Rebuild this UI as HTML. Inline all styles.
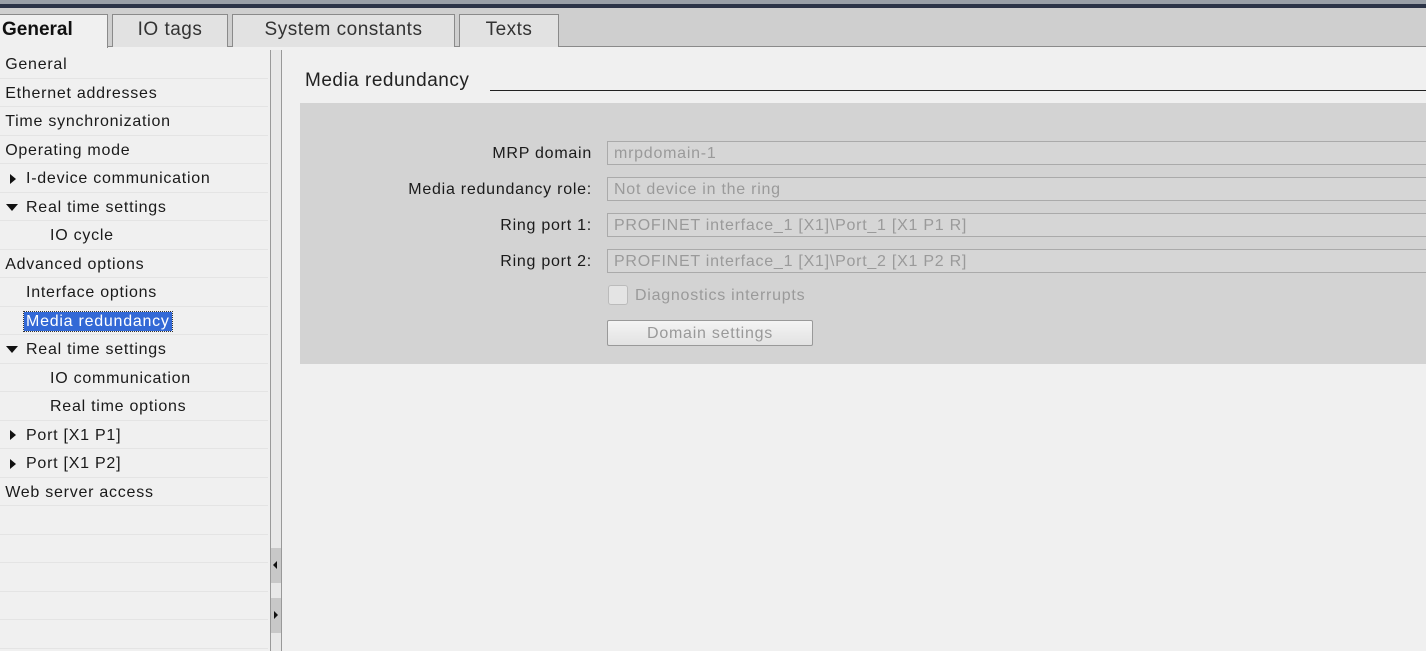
<!DOCTYPE html>
<html><head><meta charset="utf-8"><style>
*{margin:0;padding:0;box-sizing:border-box}
body{width:1426px;height:651px;overflow:hidden;background:#f0f0f0;font-family:"Liberation Sans",sans-serif;font-size:16px;letter-spacing:0.75px;color:#1a1a1a;position:relative}
.a{position:absolute}
.tab{position:absolute;top:14px;height:33px;border:1px solid #8a8a8a;border-bottom:none;background:#e2e2e2;color:#333;font-size:19px;line-height:30px;text-align:center;letter-spacing:0.5px}
.row{position:absolute;left:0;width:268px;height:28.5px;border-bottom:1px solid #e4e4e4;line-height:30px;white-space:nowrap}
.lbl{position:absolute;right:834px;text-align:right;white-space:nowrap;font-size:16px}
.fld{position:absolute;left:607px;right:-2px;height:24px;border:1px solid #aaa;background:#d6d6d6;color:#9a9a9a;line-height:23px;padding-left:6px;font-size:16px}
.tri{display:inline-block;width:0;height:0}
.r{border-top:5px solid transparent;border-bottom:5px solid transparent;border-left:6px solid #111;margin:0 10px 0 10px;vertical-align:middle}
.d{border-left:6px solid transparent;border-right:6px solid transparent;border-top:7px solid #111;margin:0 8px 0 6px;vertical-align:middle}
</style></head><body>
<div class="a" style="left:0;top:0;width:1426px;height:4px;background:#9aa0a8"></div>
<div class="a" style="left:0;top:4px;width:1426px;height:4px;background:#2c3448"></div>
<div class="a" style="left:0;top:8px;width:1426px;height:39px;background:#cfcfcf"></div>
<div class="a" style="left:0;top:46px;width:1426px;height:1px;background:#8a8a8a"></div>
<div class="tab" style="left:-2px;width:110px;background:#f0f0f0;height:34px;color:#111;font-weight:bold;text-align:left;padding-left:3px;letter-spacing:0">General</div>
<div class="tab" style="left:112px;width:116px">IO tags</div>
<div class="tab" style="left:232px;width:223px">System constants</div>
<div class="tab" style="left:459px;width:100px">Texts</div>

<div class="a" style="left:0;top:50px;width:270px;height:601px">
<div class="row" style="top:0">&nbsp;General</div>
<div class="row" style="top:28.5px">&nbsp;Ethernet addresses</div>
<div class="row" style="top:57px">&nbsp;Time synchronization</div>
<div class="row" style="top:85.5px">&nbsp;Operating mode</div>
<div class="row" style="top:114px"><span class="tri r"></span>I-device communication</div>
<div class="row" style="top:142.5px"><span class="tri d"></span>Real time settings</div>
<div class="row" style="top:171px;padding-left:50px">IO cycle</div>
<div class="row" style="top:199.5px">&nbsp;Advanced options</div>
<div class="row" style="top:228px;padding-left:26px">Interface options</div>
<div class="row" style="top:256.5px;padding-left:24px"><span style="background:#3369d6;color:#fff;outline:1px dotted #333;padding:1px 2px">Media redundancy</span></div>
<div class="row" style="top:285px"><span class="tri d"></span>Real time settings</div>
<div class="row" style="top:313.5px;padding-left:50px">IO communication</div>
<div class="row" style="top:342px;padding-left:50px">Real time options</div>
<div class="row" style="top:370.5px"><span class="tri r"></span>Port [X1 P1]</div>
<div class="row" style="top:399px"><span class="tri r"></span>Port [X1 P2]</div>
<div class="row" style="top:427.5px">&nbsp;Web server access</div>
<div class="row" style="top:456px"></div>
<div class="row" style="top:484.5px"></div>
<div class="row" style="top:513px"></div>
<div class="row" style="top:541.5px"></div>
<div class="row" style="top:570px"></div>
</div>
<div class="a" style="left:270px;top:50px;width:12px;height:601px;background:#e8e8e8;border-left:1px solid #999;border-right:1px solid #999"></div>
<div class="a" style="left:271px;top:548px;width:10px;height:35px;background:#c8c8c8"></div>
<div class="a" style="left:273px;top:561px;border-top:4px solid transparent;border-bottom:4px solid transparent;border-right:4px solid #111"></div>
<div class="a" style="left:271px;top:598px;width:10px;height:35px;background:#c8c8c8"></div>
<div class="a" style="left:274px;top:611px;border-top:4px solid transparent;border-bottom:4px solid transparent;border-left:4px solid #111"></div>

<div class="a" style="left:305px;top:70px;font-size:19px;color:#222;letter-spacing:0.5px">Media redundancy</div>
<div class="a" style="left:490px;top:90px;width:936px;height:1px;background:#222"></div>
<div class="a" style="left:300px;top:103px;width:1126px;height:261px;background:#d3d3d3"></div>
<div class="lbl" style="top:145px">MRP domain</div>
<div class="lbl" style="top:181px">Media redundancy role:</div>
<div class="lbl" style="top:217px">Ring port 1:</div>
<div class="lbl" style="top:253px">Ring port 2:</div>
<div class="fld" style="top:141px">mrpdomain-1</div>
<div class="fld" style="top:177px">Not device in the ring</div>
<div class="fld" style="top:213px">PROFINET interface_1 [X1]\Port_1 [X1 P1 R]</div>
<div class="fld" style="top:249px">PROFINET interface_1 [X1]\Port_2 [X1 P2 R]</div>
<div class="a" style="left:608px;top:285px;width:20px;height:20px;border:1px solid #bbb;border-radius:3px;background:#e4e4e4"></div>
<div class="a" style="left:635px;top:287px;color:#9a9a9a">Diagnostics interrupts</div>
<div class="a" style="left:607px;top:320px;width:206px;height:26px;border:1px solid #999;border-radius:2px;background:linear-gradient(#f4f4f4,#e2e2e2);color:#999;text-align:center;line-height:26px">Domain settings</div>
</body></html>
